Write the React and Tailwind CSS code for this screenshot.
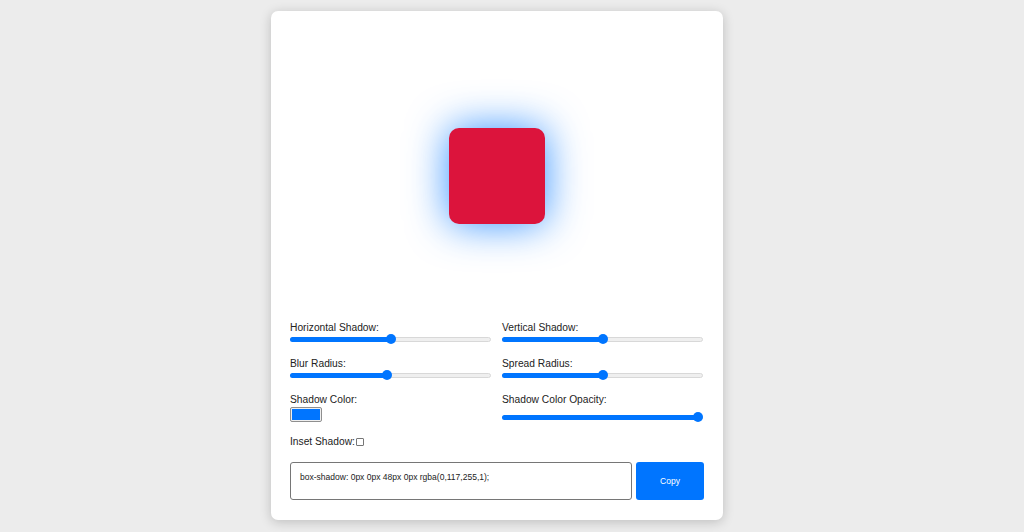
import { useState } from 'react';

const sliders = [
  { key: 'h', label: 'Horizontal Shadow:', min: -100, max: 100 },
  { key: 'v', label: 'Vertical Shadow:', min: -100, max: 100 },
  { key: 'blur', label: 'Blur Radius:', min: 0, max: 100 },
  { key: 'spread', label: 'Spread Radius:', min: -100, max: 100 },
];

export default function App() {
  const [values] = useState({ h: 0, v: 0, blur: 48, spread: 0, opacity: 1 });
  const css = `box-shadow: ${values.h}px ${values.v}px ${values.blur}px ${values.spread}px rgba(0,117,255,${values.opacity});`;

  return (
    <div className="min-h-[532px] w-full bg-[#ececec] pt-[11px] pl-[271px] font-['Liberation_Sans',Arial,sans-serif] text-[#222]">
      <div className="w-[452px] rounded-[7px] bg-white pt-[20px] pb-[20px] pl-[19px] pr-[19px] shadow-[0_2px_12px_rgba(0,0,0,0.2)]">
        <div className="flex h-[290px] items-center justify-center">
          <div className="h-[96px] w-[96px] rounded-[10px] bg-[#dc143c] shadow-[0px_0px_40px_0px_rgba(0,117,255,0.8)]" />
        </div>

        <div className="mt-[1px] grid grid-cols-2 gap-x-[11px] gap-y-[14px] pr-[1px]">
          {sliders.map((s) => (
            <div key={s.key}>
              <p className="h-[12px] text-[10.24px] leading-[12px]">{s.label}</p>
              <Slider fraction={(values[s.key] - s.min) / (s.max - s.min)} />
            </div>
          ))}
          <div>
            <p className="h-[12px] text-[10.24px] leading-[12px]">Shadow Color:</p>
            <div className="mt-[1px] h-[15px] w-[32px] rounded-[2px] border border-[#8f8f8f] bg-[#efefef] p-[1px]">
              <div className="h-full w-full bg-[#0075ff]" />
            </div>
          </div>
          <div>
            <p className="h-[12px] text-[10.24px] leading-[12px]">Shadow Color Opacity:</p>
            <div className="mt-[6px]">
              <Slider fraction={values.opacity} />
            </div>
          </div>
        </div>

        <div className="mt-[14px] flex h-[12px] items-center text-[10.24px] leading-[12px]">
          <span>Inset Shadow:</span>
          <span className="ml-[1px] inline-block h-[8px] w-[8px] rounded-[1px] border border-[#767676] bg-white" />
        </div>

        <div className="mt-[14px] flex h-[38px] gap-[4px]">
          <div className="flex-1 rounded-[3px] border border-[#767676] pl-[9px] pt-[9px] text-[8.53px] leading-[11px] text-[#222]">
            {css}
          </div>
          <button className="w-[68px] rounded-[3px] bg-[#0075ff] text-[8.53px] text-white">Copy</button>
        </div>
      </div>
    </div>
  );
}

function Slider({ fraction }) {
  return (
    <div className="relative h-[10px] w-full">
      <div className="absolute left-0 right-0 top-[2.5px] h-[5px] rounded-full border border-[#d8d8d8] bg-[#efefef]" />
      <div
        className="absolute left-0 top-[2.5px] h-[5px] rounded-full bg-[#0075ff]"
        style={{ width: `calc(5px + ${fraction} * (100% - 10px))` }}
      />
      <div
        className="absolute top-0 h-[10px] w-[10px] rounded-full bg-[#0075ff]"
        style={{ left: `calc(${fraction} * (100% - 10px))` }}
      />
    </div>
  );
}
